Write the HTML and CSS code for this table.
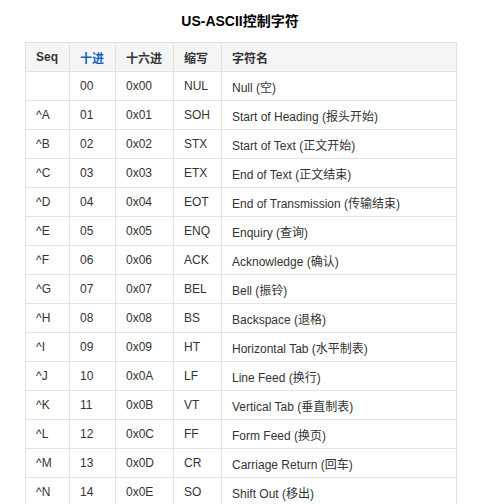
FILE: index.html
```html
<!DOCTYPE html>
<html>
<head>
<meta charset="utf-8">
<link rel="stylesheet" href="styles.css">
</head>
<body>
<div class="wrap">
  <h3 class="title">US-ASCII控制字符</h3>
  <table class="ascii">
    <colgroup>
      <col class="c1"><col class="c2"><col class="c3"><col class="c4"><col class="c5">
    </colgroup>
    <thead>
      <tr><th>Seq</th><th class="hl">十进</th><th>十六进</th><th>缩写</th><th>字符名</th></tr>
    </thead>
    <tbody>
      <tr><td></td><td>00</td><td>0x00</td><td>NUL</td><td>Null (空)</td></tr>
      <tr><td>^A</td><td>01</td><td>0x01</td><td>SOH</td><td>Start of Heading (报头开始)</td></tr>
      <tr><td>^B</td><td>02</td><td>0x02</td><td>STX</td><td>Start of Text (正文开始)</td></tr>
      <tr><td>^C</td><td>03</td><td>0x03</td><td>ETX</td><td>End of Text (正文结束)</td></tr>
      <tr><td>^D</td><td>04</td><td>0x04</td><td>EOT</td><td>End of Transmission (传输结束)</td></tr>
      <tr><td>^E</td><td>05</td><td>0x05</td><td>ENQ</td><td>Enquiry (查询)</td></tr>
      <tr><td>^F</td><td>06</td><td>0x06</td><td>ACK</td><td>Acknowledge (确认)</td></tr>
      <tr><td>^G</td><td>07</td><td>0x07</td><td>BEL</td><td>Bell (振铃)</td></tr>
      <tr><td>^H</td><td>08</td><td>0x08</td><td>BS</td><td>Backspace (退格)</td></tr>
      <tr><td>^I</td><td>09</td><td>0x09</td><td>HT</td><td>Horizontal Tab (水平制表)</td></tr>
      <tr><td>^J</td><td>10</td><td>0x0A</td><td>LF</td><td>Line Feed (换行)</td></tr>
      <tr><td>^K</td><td>11</td><td>0x0B</td><td>VT</td><td>Vertical Tab (垂直制表)</td></tr>
      <tr><td>^L</td><td>12</td><td>0x0C</td><td>FF</td><td>Form Feed (换页)</td></tr>
      <tr><td>^M</td><td>13</td><td>0x0D</td><td>CR</td><td>Carriage Return (回车)</td></tr>
      <tr><td>^N</td><td>14</td><td>0x0E</td><td>SO</td><td>Shift Out (移出)</td></tr>
    </tbody>
  </table>
</div>
</body>
</html>
```
FILE: styles.css
```css
html, body {
  margin: 0;
  padding: 0;
  background: #fff;
}
body {
  font-family: "Liberation Sans", Arial, "Noto Sans CJK SC", sans-serif;
  color: #333;
}
.wrap {
  padding-top: 13px;
}
.title {
  margin: 0 0 12px;
  text-align: center;
  font-size: 14px;
  line-height: 17px;
  font-weight: bold;
  color: #000;
}
.ascii {
  border-collapse: collapse;
  margin-left: 25px;
  width: 432px;
  table-layout: fixed;
  font-size: 12px;
}
.c1 { width: 44px; }
.c2 { width: 46px; }
.c3 { width: 58px; }
.c4 { width: 48px; }
.c5 { width: 235px; }
.ascii th,
.ascii td {
  border: 1px solid #e2e2e2;
  height: 28px;
  padding: 0 0 0 10px;
  text-align: left;
  vertical-align: middle;
  white-space: nowrap;
}
.ascii th {
  background: #f5f5f5;
  font-weight: bold;
  color: #333;
}
.ascii th.hl {
  color: #1560bd;
}
```
